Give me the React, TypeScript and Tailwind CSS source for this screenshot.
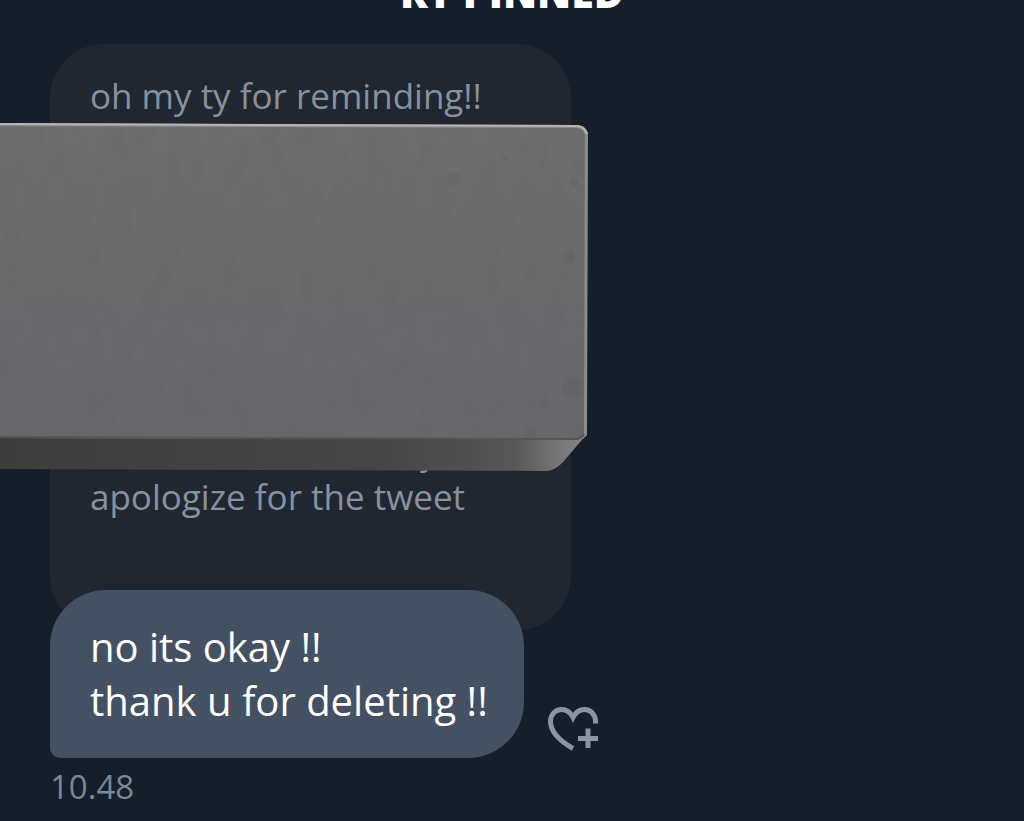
import { useId } from 'react'

function HeartPlusIcon() {
  return (
    <svg viewBox="0 0 51 45" className="h-[45px] w-[51px]" fill="none" stroke="currentColor" strokeWidth="5" aria-hidden="true">
      <path d="M25 41.5C12 34 2.500 25 2.500 14.500C2.500 7.500 7.500 2.500 13.500 2.500C18.500 2.500 22.500 5.500 25 10.500C27.500 5.500 31.500 2.500 36.500 2.500C42.500 2.500 47.500 7.500 47.500 14.500V16.500" />
      <path d="M40 21.500V41M30 31.500H50" />
    </svg>
  )
}

// Concrete slab lying over the quoted message
function Slab() {
  const id = useId()
  return (
    <svg viewBox="0 0 590 350" className="absolute left-0 top-[122px] h-[350px] w-[590px]" aria-hidden="true">
      <defs>
        <linearGradient id={`${id}face`} x1="0" y1="0" x2="0" y2="1">
          <stop offset="0" stopColor="#6f6f70" />
          <stop offset="0.300" stopColor="#6c6c6c" />
          <stop offset="0.600" stopColor="#69696b" />
          <stop offset="1" stopColor="#68686a" />
        </linearGradient>
        <linearGradient id={`${id}side`} x1="0" y1="0" x2="588" y2="0" gradientUnits="userSpaceOnUse">
          <stop offset="0" stopColor="#3d3d3e" />
          <stop offset="0.650" stopColor="#464647" />
          <stop offset="0.800" stopColor="#505051" />
          <stop offset="0.880" stopColor="#59595a" />
          <stop offset="0.950" stopColor="#777778" />
          <stop offset="1" stopColor="#858587" />
        </linearGradient>
        <filter id={`${id}grain`} x="0" y="0" width="1" height="1" colorInterpolationFilters="sRGB">
          <feTurbulence type="fractalNoise" baseFrequency="0.060 0.030" numOctaves="4" seed="7" />
          <feColorMatrix values="0 0 0 0 0.340  0 0 0 0 0.340  0 0 0 0 0.360  0.300 0 0 0 -0.110" />
        </filter>
        <clipPath id={`${id}clip`}>
          <path d="M0 5L578 7Q584 8 584 14V312Q583 316 577 316L0 315Z" />
        </clipPath>
      </defs>
      <path d="M0 312H587L563 340Q555 349 545 349L0 347Z" fill={`url(#${id}side)`} />
      <path d="M0 1L578 3Q588 4 588 14L587 313L583 317L0 316Z" fill="#8b8b8d" />
      <path d="M0 2L577 4Q585 5 587 12" fill="none" stroke="#b4b4b7" strokeWidth="2" />
      <path d="M0 4L577 6Q584 7 585 14L584 312Q583 316 577 317L0 316Z" fill={`url(#${id}face)`} />
      <rect width="585" height="316" filter={`url(#${id}grain)`} clipPath={`url(#${id}clip)`} />
      <g fill="#5f5f62" opacity="0.300">
        <circle cx="454" cy="57" r="7" />
        <circle cx="505" cy="37" r="3" />
        <circle cx="542" cy="43" r="3" />
        <circle cx="574" cy="60" r="5" />
        <circle cx="568" cy="135" r="7" />
        <circle cx="573" cy="266" r="10" />
        <circle cx="544" cy="280" r="4" />
        <circle cx="530" cy="311" r="5" />
      </g>
      <path d="M0 315L577 317Q582 316 584 312" fill="none" stroke="#555556" strokeWidth="2" />
    </svg>
  )
}

export default function App() {
  return (
    <main className="relative min-h-screen overflow-hidden bg-[#151f2b] font-['Open_Sans',sans-serif]">
      <header className="flex h-11 items-start justify-center overflow-hidden">
        <h1 className="-mt-8 text-[41px] leading-[48px] font-extrabold text-white">RT PINNED</h1>
      </header>

      <section className="flex flex-col items-start px-[50px]">
        <blockquote className="flex h-[586px] w-[521px] flex-col justify-between rounded-[54px] bg-[#202731] px-10 pt-[29px] pb-[111px] text-[35px] leading-[45px] text-[#87919e]">
          <p>oh my ty for reminding!!</p>
          <div>
            <p className="pl-[330px]">y</p>
            <p>apologize for the tweet</p>
          </div>
        </blockquote>

        <div className="relative -mt-10 flex items-end gap-6">
          <div className="rounded-[56px] rounded-bl-[10px] bg-[#445163] py-[30px] pr-9 pl-10 text-[40px] leading-[54px] text-white">
            <p>no its okay !!</p>
            <p>thank u for deleting !!</p>
          </div>
          <button type="button" aria-label="Add reaction" className="mb-[6px] text-[#8a96a3]">
            <HeartPlusIcon />
          </button>
        </div>

        <time className="pt-2 text-[33px] leading-[42px] text-[#7b8793]">10.48</time>
      </section>

      <Slab />
    </main>
  )
}
